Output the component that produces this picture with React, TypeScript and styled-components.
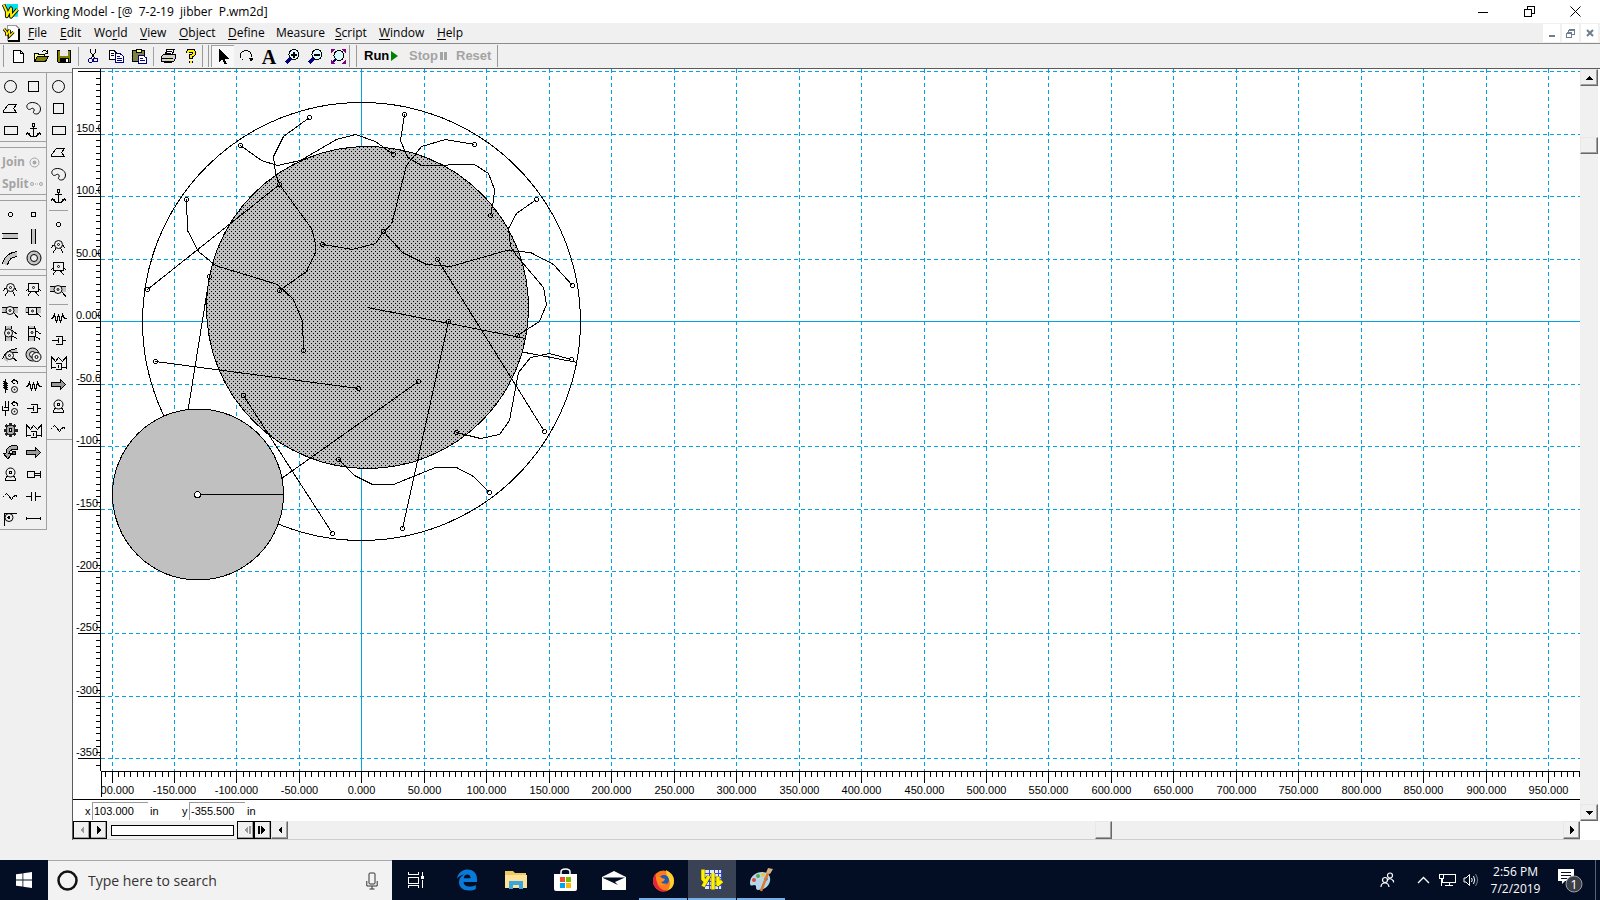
import React from "react";
import styled, { createGlobalStyle } from "styled-components";

const FACE = "#f0f0f0";
const UI = '"Open Sans", "Noto Sans", sans-serif';
const READOUT = '"Liberation Sans", Arial, sans-serif';

const GlobalStyle = createGlobalStyle`
  *, *::before, *::after { box-sizing: border-box; }
  body { margin: 0; background: ${FACE}; color: #000; font-family: ${UI}; font-size: 12px; overflow: hidden; }
  button, input { font: inherit; color: inherit; margin: 0; padding: 0; border: 0; background: none; border-radius: 0; }
  svg { display: block; flex: none; }
`;

/* ---------- frame ---------- */

const Desktop = styled.div`
  display: flex;
  flex-direction: column;
  height: 100vh;
`;

const TitleBar = styled.header`
  display: flex;
  align-items: center;
  height: 23px;
  padding: 0 2px;
  gap: 4px;
  background: #fff;
`;

const Title = styled.h1`
  flex: 1;
  margin: 0;
  font-size: 12px;
  font-weight: 400;
  line-height: 20px;
  white-space: pre;
`;

const CaptionButtons = styled.div`
  display: flex;
`;

const CaptionButton = styled.button`
  display: grid;
  place-items: center;
  width: 46px;
  height: 22px;
`;

const MenuBar = styled.nav`
  display: flex;
  align-items: center;
  height: 21px;
  padding: 0 2px 0 3px;
  background: ${FACE};
  border-bottom: 1px solid #8c8c8c;
`;

const MenuItem = styled.button<{ $w: number }>`
  width: ${(p) => p.$w}px;
  height: 20px;
  padding-left: 7px;
  line-height: 18px;
  text-align: left;
  white-space: nowrap;
  u { text-underline-offset: 2px; }
`;

const MdiButtons = styled.div`
  display: flex;
  gap: 2px;
  margin-left: auto;
`;

const MdiButton = styled.button`
  display: grid;
  place-items: center;
  width: 17px;
  height: 18px;
  background: #fff;
`;

/* ---------- toolbar ---------- */

const ToolBar = styled.div`
  display: flex;
  align-items: center;
  height: 24px;
  background: ${FACE};
`;

const ToolGroup = styled.div<{ $lead: number; $pad?: number }>`
  display: flex;
  align-items: center;
  height: 22px;
  margin-left: ${(p) => p.$lead}px;
  padding-left: ${(p) => p.$pad ?? 2}px;
  border-left: 1px solid #9a9a9a;
  border-right: 1px solid #9a9a9a;
`;

const ToolButton = styled.button<{ $pressed?: boolean }>`
  display: grid;
  place-items: center;
  width: 23px;
  height: 22px;
  background: ${(p) => (p.$pressed ? "#f8f8f8" : "transparent")};
  border-style: solid;
  border-width: 1px 0 0 1px;
  border-color: ${(p) => (p.$pressed ? "#a0a0a0" : "transparent")};
`;

const ToolDivider = styled.span`
  width: 1px;
  height: 19px;
  margin: 0 2px 0 3px;
  background: #a0a0a0;
`;

const RunButton = styled.button<{ $w: number }>`
  display: flex;
  align-items: center;
  gap: 2px;
  width: ${(p) => p.$w}px;
  height: 22px;
  font: bold 13px/22px "Liberation Sans", sans-serif;
  &:disabled { color: #a4a4a4; }
`;

/* ---------- palettes ---------- */

const Workspace = styled.main`
  display: flex;
  flex: 1;
  min-height: 0;
`;

const PaletteWide = styled.aside`
  width: 47px;
  padding-top: 4px;
`;

const PaletteSlim = styled.aside`
  width: 25px;
  padding-top: 4px;
`;

const PaletteBlock = styled.div`
  display: grid;
  grid-template-columns: 22px 23px;
  grid-auto-rows: 22px;
  margin-bottom: 5px;
  padding-top: 2px;
  border: 1px solid #a0a0a0;
  border-left-width: 0;
`;

const PaletteButton = styled.button`
  display: grid;
  place-items: center;
  width: 100%;
  max-width: 23px;
  height: 22px;
`;

const PaletteText = styled.button`
  grid-column: 1 / -1;
  display: flex;
  align-items: center;
  gap: 1px;
  padding: 2px 0 0 2px;
  font: bold 12px/20px ${UI};
  &:disabled { color: #a4a4a4; }
`;

const PaletteRule = styled.hr`
  width: 19px;
  height: 6px;
  margin: 0 2px;
  border: 0;
  background: linear-gradient(#a0a0a0, #a0a0a0) 0 3px / 100% 1px no-repeat;
`;

const SlimFrame = styled.div`
  padding-top: 2px;
  border: 1px solid #a0a0a0;
  border-right: 0;
  border-left-width: 0;
  box-shadow: -1px 0 0 #a0a0a0;
`;

/* ---------- document ---------- */

const DocumentPane = styled.section`
  display: flex;
  flex-direction: column;
  flex: 1;
  min-width: 0;
  border: solid #605860;
  border-width: 1px 0 0 1px;
  background: #fff;
`;

const DocumentBody = styled.div`
  display: flex;
  flex: 1;
  min-height: 0;
`;

const Sheet = styled.div`
  display: grid;
  grid-template-columns: 28px minmax(0, 1fr);
  grid-template-rows: minmax(0, 1fr) 29px 21px;
  flex: 1;
  min-width: 0;
`;

const Drawing = styled.svg`
  width: 100%;
  height: 100%;
  overflow: hidden;
  shape-rendering: crispEdges;
  text {
    font-family: ${READOUT};
    font-size: 11px;
  }
`;

const RulerCorner = styled.div`
  border: solid #000;
  border-width: 0 0 1px;
`;

const CoordBar = styled.form`
  grid-column: 1 / -1;
  display: flex;
  align-items: center;
  padding-left: 12px;
  font: 11px/18px ${READOUT};
`;

const CoordLabel = styled.label`
  width: 7px;
`;

const CoordInput = styled.input`
  width: 56px;
  height: 18px;
  padding-left: 1px;
  border: solid #9a9a9a;
  border-width: 1px 0 0 1px;
`;

const CoordUnit = styled.span`
  width: 34px;
  padding-left: 2px;
`;

const VScroll = styled.div`
  display: flex;
  flex-direction: column;
  width: 18px;
  margin-right: 2px;
  background: ${FACE};
`;

const HScrollRow = styled.div`
  display: flex;
  height: 19px;
  margin-right: 20px;
  background: ${FACE};
  border-bottom: 1px solid #c8d0c8;
`;

const Spacer = styled.span<{ $grow: number }>`
  flex: ${(p) => p.$grow} 1 0;
`;

const Bevel = styled.button<{ $outlined?: boolean; $vertical?: boolean }>`
  display: grid;
  place-items: center;
  flex: none;
  width: ${(p) => (p.$vertical ? 18 : 17)}px;
  height: ${(p) => (p.$vertical ? 17 : 18)}px;
  background: ${FACE};
  border: 1px solid;
  border-color: ${(p) => (p.$outlined ? "#000" : "#e8e8e8 #696969 #696969 #e8e8e8")};
  box-shadow: inset -1px -1px 0 #a0a0a0;
`;

const TapeTrack = styled.div`
  display: flex;
  align-items: center;
  width: 130px;
  padding: 0 3px 0 4px;
  background: ${FACE};
`;

const Tape = styled.div`
  flex: 1;
  height: 11px;
  background: #fff;
  border: 1px solid #000;
`;

const StatusBar = styled.footer`
  height: 20px;
  background: ${FACE};
`;

/* ---------- taskbar ---------- */

const TaskBar = styled.footer`
  display: flex;
  align-items: stretch;
  height: 40px;
  background: #030d24;
  color: #fff;
`;

const StartButton = styled.button`
  display: grid;
  place-items: center;
  width: 48px;
`;

const SearchBox = styled.label`
  display: flex;
  align-items: center;
  gap: 10px;
  width: 344px;
  padding: 0 14px 0 9px;
  background: #f2f2f2;
  border-top: 1px solid #a8a8b0;
  color: #333;
`;

const SearchInput = styled.input`
  flex: 1;
  min-width: 0;
  font-size: 14px;
  &::placeholder { color: #333; opacity: 1; }
`;

const TaskList = styled.div`
  display: flex;
  gap: 1px;
  margin-left: 3px;
`;

const TaskButton = styled.button<{ $state?: "open" | "active" }>`
  display: grid;
  place-items: center;
  width: 48px;
  background: ${(p) => (p.$state === "active" ? "#3a4256" : "transparent")};
  box-shadow: ${(p) => (p.$state ? "inset 0 -2px 0 #76b0e6" : "none")};
`;

const Tray = styled.div`
  display: flex;
  align-items: center;
  margin-left: auto;
`;

const TrayButton = styled.button<{ $w: number }>`
  display: grid;
  place-items: center;
  width: ${(p) => p.$w}px;
  height: 40px;
`;

const Clock = styled.time`
  width: 65px;
  font-size: 12px;
  line-height: 17px;
  text-align: center;
`;

const PeekEdge = styled.button`
  width: 5px;
  height: 40px;
  margin-left: 3px;
  border-left: 1px solid #5a6274;
`;

/* ---------- palette glyphs, drawn on a 22px grid ---------- */

const GREY = "#a8a8a8";

/* one-pixel ring, five pixels across */
const RING = "M-1.500-2.500h3v1h-3zM-1.500 1.500h3v1h-3zM-2.500-1.500h1v3h-1zM1.500-1.500h1v3h-1z";

const glyphs: Record<string, React.ReactNode> = {
  circle: <circle cx="11.500" cy="11.500" r="6" shapeRendering="auto" />,
  square: <rect x="6.500" y="6.500" width="10" height="10" />,
  polygon: <path d="M4.500 15.500V13.500L9.500 7.500H17.500L14.500 11.500L17.500 15.500Z" />,
  blob: <path d="M5.500 11.500C3.500 8.500 6 5.500 10.500 5.500C15 5.500 18.500 8.500 18.500 12C18.500 15 16.500 17 14.500 17C12 17 10.500 15.500 12 14C13 12.500 11 10.500 9.500 11.500C8.500 12.500 6.500 13 5.500 11.500Z" shapeRendering="auto" />,
  rect: <rect x="5.500" y="7.500" width="13" height="8" />,
  anchor: (
    <>
      <circle cx="11.500" cy="6" r="1.500" />
      <path d="M11.500 8V17.500M8 9.500H15M5.500 13.500Q6 17.500 11.500 17.500Q17 17.500 17.500 13.500M4 15.500L5.500 13.500L8 15.500M15 15.500L17.500 13.500L19 15.500" />
    </>
  ),
  point: <path d={RING} transform="translate(11.500 11.500)" fill="#000" stroke="none" />,
  squarePoint: <rect x="9.500" y="9.500" width="4" height="4" />,
  hSlot: (
    <>
      <rect x="4" y="9" width="15" height="4" fill="#c4c4c4" stroke="none" />
      <path d="M3 8.500H19M3 13.500H19" />
    </>
  ),
  vSlot: (
    <>
      <rect x="9" y="4" width="4" height="15" fill="#c4c4c4" stroke="none" />
      <path d="M9.500 4V19M13.500 4V19" />
    </>
  ),
  curvedSlot: (
    <>
      <path d="M3.500 17Q6 6 18 4.500V9.500Q10 10 8.500 18Z" fill="#c4c4c4" stroke="none" />
      <path d="M3.500 17Q6 6 18.500 4.500M8.500 18Q10 10 18.500 9.500" />
    </>
  ),
  ring: (
    <g shapeRendering="auto">
      <circle cx="12" cy="11" r="7" fill="#c4c4c4" />
      <circle cx="12" cy="11" r="3.500" fill={FACE} />
    </g>
  ),
  pin: (
    <>
      <path d="M8 10.500H6L3.500 13.500M14 10.500H16L18.500 13.500M9 13.500L5.500 18.500M13.500 13.500L16.500 18.500" />
      <g shapeRendering="auto">
        <circle cx="11.500" cy="9.500" r="4" fill={FACE} />
        <circle cx="11.500" cy="9.500" r="1" />
      </g>
    </>
  ),
  rigid: (
    <>
      <path d="M6.500 10.500L3.500 13.500M16.500 10.500L19.500 13.500M8.500 14L5.500 18.500M13.500 14L17.500 18.500" />
      <rect x="6.500" y="5.500" width="10" height="8" fill={FACE} />
      <circle cx="11.500" cy="9.500" r="1" shapeRendering="auto" />
    </>
  ),
  hSlotPin: (
    <>
      <path d="M3 8H7V12.500H3ZM15 8H19V12.500H15Z" fill="#c4c4c4" stroke="none" />
      <path d="M3 7.500H19M3 12.500H8M14 11.500L19.500 18.500" />
      <g shapeRendering="auto">
        <circle cx="11" cy="10.500" r="4" fill={FACE} />
        <circle cx="11" cy="10.500" r="1" />
      </g>
    </>
  ),
  hSlotSquare: (
    <>
      <path d="M3 8H7V12.500H3ZM15 8H19V12.500H15Z" fill="#c4c4c4" stroke="none" />
      <path d="M4 7.500H19M4 12.500H8M14 12.500L19.500 17.500" />
      <rect x="6.500" y="7.500" width="8" height="7" fill={FACE} />
      <circle cx="10.500" cy="11" r="1" shapeRendering="auto" />
    </>
  ),
  vSlotPin: (
    <>
      <path d="M7 4H12.500V7H7ZM7 15H12.500V19H7Z" fill="#c4c4c4" stroke="none" />
      <path d="M6.500 4V19M12.500 4V7M12.500 15V19M13 8.500L18.500 12.500M12 14L18.500 16.500" />
      <g shapeRendering="auto">
        <circle cx="9.500" cy="11" r="4" fill={FACE} />
        <circle cx="9.500" cy="11" r="1" />
      </g>
    </>
  ),
  vSlotSquare: (
    <>
      <path d="M7 4H12.500V7H7ZM7 15H12.500V19H7Z" fill="#c4c4c4" stroke="none" />
      <path d="M6.500 4V19M12.500 4V7M12.500 15V19M13.500 8.500L19.500 12.500M13 14.500L18.500 17.500" />
      <rect x="6.500" y="6.500" width="7" height="8" fill={FACE} />
      <circle cx="10" cy="10.500" r="1" shapeRendering="auto" />
    </>
  ),
  curvedPin: (
    <>
      <path d="M4.500 16Q6 6 18 4.500V8Q10 10 8.500 18Z" fill="#c4c4c4" stroke="none" />
      <path d="M3.500 15Q6 6 18.500 4.500M13 8.500H18.500M13 13L18.500 17.500" />
      <g shapeRendering="auto">
        <circle cx="10.500" cy="11.500" r="4" fill={FACE} />
        <circle cx="10.500" cy="11.500" r="1" />
      </g>
    </>
  ),
  ringPin: (
    <g shapeRendering="auto">
      <circle cx="10.500" cy="10.500" r="6.500" fill="#c4c4c4" />
      <circle cx="10.500" cy="10.500" r="3" fill={FACE} />
      <circle cx="14.500" cy="13" r="4.500" fill={FACE} />
      <circle cx="14.500" cy="13" r="1.500" />
    </g>
  ),
  rotSpring: (
    <>
      <path d="M6.500 4V6.500H4L9 8.500H4L9 10.500H4L9 12.500H4L9 14.500H6.500V18M13 6.500Q18.500 3 18.500 9M15.500 4L12.500 6.500L15.500 9" />
      <g shapeRendering="auto">
        <circle cx="15.500" cy="14.500" r="3" />
        <circle cx="15.500" cy="14.500" r="0.500" />
      </g>
    </>
  ),
  rotDamper: (
    <>
      <path d="M6.500 4V10.500M5 10.500H9M3.500 9V13.500H9.500V4M6.500 13.500V18.500M13 6.500Q18.500 3 18.500 9M15.500 4L12.500 6.500L15.500 9" />
      <g shapeRendering="auto">
        <circle cx="15.500" cy="14.500" r="3" />
        <circle cx="15.500" cy="14.500" r="0.500" />
      </g>
    </>
  ),
  spring: <path d="M4 11.500H5.500L7.500 7.500L9.500 15.500L11.500 7.500L13.500 15.500L15.500 7.500L17.500 11.500H20" />,
  damper: <path d="M5 11.500H11.500M11.500 9V14M9 7.500H15.500M9 15.500H15.500M15.500 7.500V15.500M15.500 11.500H19" />,
  gear: (
    <>
      <path d="M11.500 4V18M4.500 11H18.500M6.500 6L16.500 16M16.500 6L6.500 16" strokeWidth="3" stroke="#222" />
      <circle cx="11.500" cy="11" r="4.500" fill={GREY} stroke="#222" />
      <circle cx="11.500" cy="11" r="1.500" fill={FACE} />
    </>
  ),
  springDamper: <path d="M4.500 17.500V5.500L8.500 10.500L11.500 6.500L15.500 10.500L19.500 5.500V17.500M4.500 16.500H9M9 12.500H14.500V18.500H9M11.500 14V17M14.500 16.500H19.500" />,
  torque: (
    <>
      <path d="M18 5Q8 3 7 12H4L9 18L13 12H10Q11 8 18 8Z" fill={GREY} />
      <circle cx="15" cy="12" r="2" fill="#666" />
    </>
  ),
  force: <path d="M4.500 9.500H13.500V6.500L18.500 11.500L13.500 16.500V13.500H4.500Z" fill="#999" />,
  motor: (
    <>
      <circle cx="11.500" cy="9.500" r="4.500" shapeRendering="auto" />
      <circle cx="11.500" cy="9.500" r="1" />
      <path d="M8.500 13L6.500 15.500V17.500H16.500V15.500L14.500 13" />
    </>
  ),
  actuator: (
    <>
      <rect x="5.500" y="8.500" width="7" height="6" />
      <rect x="12.500" y="10.500" width="6" height="2" />
      <path d="M18.500 8V15" />
    </>
  ),
  wave: <path d="M4 11.500L5.500 10.500L7.500 8.500L9.500 10.500L12.500 14.500L14.500 11.500L16.500 10.500L18.500 11.500" />,
  separator: <path d="M4 11.500H9.500M9.500 7V16M13.500 7V16M13.500 11.500H19" />,
  pulley: (
    <>
      <path d="M5.500 18.500V6.500H18" />
      <circle cx="10" cy="10.500" r="4" shapeRendering="auto" />
      <circle cx="10" cy="10.500" r="1" />
    </>
  ),
  rod: <path d="M5 11.500H18M4.500 10V13M18.500 10V13" />,
};

function Glyph({ name }: { name: string }) {
  return (
    <svg width="22" height="22" viewBox="1 0 22 22" fill="none" stroke="#000" shapeRendering="crispEdges" aria-hidden>
      {glyphs[name]}
    </svg>
  );
}

const Tools = ({ names }: { names: string[] }) => (
  <>
    {names.map((n) => (
      <PaletteButton key={n} type="button" aria-label={n}>
        <Glyph name={n} />
      </PaletteButton>
    ))}
  </>
);

const Arrow = ({ dir, color = "#000", bar }: { dir: "l" | "r" | "u" | "d"; color?: string; bar?: boolean }) => {
  const d = { l: "M7 1V9L3 5Z", r: "M3 1V9L7 5Z", u: "M1 7H9L5 3Z", d: "M1 3H9L5 7Z" }[dir];
  return (
    <svg width="12" height="10" viewBox="-1 0 12 10" fill={color} shapeRendering="crispEdges" aria-hidden>
      <path d={d} />
      {bar && <path d={dir === "l" ? "M8 1h2v8h-2z" : "M0 1h2v8h-2z"} />}
    </svg>
  );
};

/* ---------- world geometry ---------- */

const STEP_X = 62.46;
const STEP_Y = 62.44;
const ORIGIN_X = 260.88;
const ORIGIN_Y = 252.7;
const gx = (k: number) => Math.floor(ORIGIN_X + k * STEP_X) + 0.5;
const gy = (k: number) => Math.floor(ORIGIN_Y - k * STEP_Y) + 0.5;
const range = (a: number, b: number) => Array.from({ length: b - a + 1 }, (_, i) => a + i);
const COLS = range(-4, 40);
const ROWS = range(-16, 4);
const COL_LABELS = range(-4, 19);
const ROW_LABELS = range(-7, 3);

const wires = [
  "309,117 283,136 273,156 275,173 279,184 311,228 315,243 315,252 306,271 279,290",
  "240,145 261,160 277,165 300,160 336,139 355,134 375,141 393,154",
  "186,199 187,230 198,251 215,265 277,284 293,299 302,321 303,350",
  "147,289 279,184",
  "322,244 352,249 375,243 383,231 391,224 406,165 421,146 445,139 474,144",
  "404,114 400,140 407,157 421,165 474,164 488,173 494,189 493,200 490,215",
  "383,231 402,252 426,264 450,266 506,250 530,252 553,264 572,285",
  "536,199 516,213 508,228 510,246 516,255 543,287 546,304 539,321 517,335",
  "437,259 544,431",
  "448,321 402,528",
  "155,361 358,388",
  "243,395 332,533",
  "338,459 354,475 372,484 393,484 435,467 456,467 473,476 489,492",
  "571,359 549,353 530,357 518,372 509,420 499,434 480,438 456,432",
  "209,276 180,457",
  "418,381 240,507",
  "367,307 525,338",
];

const joints = [
  [309, 117], [279, 184], [279, 290], [240, 145], [393, 154], [186, 199], [303, 350], [147, 289], [322, 244],
  [383, 231], [474, 144], [404, 114], [490, 215], [572, 285], [536, 199], [517, 335], [437, 259], [544, 431],
  [448, 321], [402, 528], [155, 361], [358, 388], [243, 395], [332, 533], [338, 459], [489, 492], [571, 359],
  [456, 432], [209, 276], [418, 381],
];

function World() {
  return (
    <Drawing role="img" aria-label="Simulation world">
      <defs>
        <pattern id="stipple" width="4" height="4" patternUnits="userSpaceOnUse" patternTransform="translate(0.500 0.500)">
          <rect width="4" height="4" fill="#c0c0c0" />
          <path d="M0 0h1v1h-1zM2 2h1v1h-1z" fill="#000" />
        </pattern>
      </defs>
      <g stroke="#00a2e8" strokeDasharray="4 3">
        {COLS.filter((k) => k !== 0).map((k) => (
          <line key={k} x1={gx(k)} x2={gx(k)} y1="0" y2="100%" />
        ))}
        {ROWS.filter((k) => k !== 0).map((k) => (
          <line key={k} x1="0" x2="100%" y1={gy(k)} y2={gy(k)} />
        ))}
      </g>
      <g stroke="#00a2e8">
        <line x1={gx(0)} x2={gx(0)} y1="0" y2="100%" />
        <line x1="0" x2="100%" y1={gy(0)} y2={gy(0)} />
      </g>
      <g transform="translate(-100.500 -68.500)" fill="none" stroke="#000">
        <circle cx="361" cy="321" r="219" fill="none" />
        <path d="M361 321L577 362" />
        <circle cx="367" cy="307" r="161" fill="url(#stipple)" />
        {wires.map((w) => (
          <polyline key={w} points={w} />
        ))}
        <g fill="#000" stroke="none">
          {joints.map(([x, y]) => (
            <path key={`${x}-${y}`} d={RING} transform={`translate(${x} ${y})`} />
          ))}
        </g>
        <circle cx="197.500" cy="494" r="85.500" fill="#c0c0c0" />
        <path d="M197 494H283" />
        <circle cx="197" cy="494" r="3" fill="#fff" />
      </g>
    </Drawing>
  );
}

function VerticalRuler() {
  return (
    <Drawing aria-label="Vertical ruler">
      <g stroke="#000">
        {range(-160, 40).map((k) => (
          <line key={k} x1="23" x2="28" y1={gy(k / 10)} y2={gy(k / 10)} />
        ))}
        {ROWS.map((k) => (
          <line key={k} x1="5" x2="28" y1={gy(k)} y2={gy(k)} />
        ))}
        <line x1="27.500" x2="27.500" y1="0" y2="100%" />
      </g>
      <svg width="27" height="100%">
        {ROW_LABELS.map((k) => (
          <text key={k} x="3" y={gy(k) - 3}>
            {(k * 50).toFixed(3)}
          </text>
        ))}
      </svg>
    </Drawing>
  );
}

function HorizontalRuler() {
  return (
    <Drawing aria-label="Horizontal ruler">
      <g stroke="#000">
        <line x1="0" x2="100%" y1="0.500" y2="0.500" />
        <line x1="0" x2="100%" y1="28.500" y2="28.500" />
        <line x1="0.500" x2="0.500" y1="0" y2="26" />
        {range(-41, 400).map((k) => (
          <line key={k} x1={gx(k / 10)} x2={gx(k / 10)} y1="0" y2="6" />
        ))}
        {COLS.map((k) => (
          <line key={k} x1={gx(k)} x2={gx(k)} y1="0" y2="12" />
        ))}
      </g>
      {COL_LABELS.map((k) => (
        <text key={k} x={gx(k)} y="23" textAnchor="middle">
          {(k * 50).toFixed(3)}
        </text>
      ))}
    </Drawing>
  );
}

/* ---------- application icons ---------- */

const MARK = "M1.500 1.500L4.500 8V12.500L8.500 5V13L14.500 6";

const ModelMark = () => (
  <svg width="17" height="17" viewBox="0 0 16 16" fill="none" strokeLinejoin="round" aria-hidden>
    <path d="M4 1H15V13H6Z" fill="#00e0ee" />
    <path d={MARK} stroke="#000" strokeWidth="3.500" />
    <path d={MARK} stroke="#ffee00" strokeWidth="1.800" />
  </svg>
);

const DocMark = () => (
  <svg width="18" height="17" viewBox="0 0 18 17" aria-hidden>
    <path d="M4.500 .5H13L16.500 4V15.500H4.500Z" fill="#fff" stroke="#999" shapeRendering="crispEdges" />
    <path d="M16 4V16H5" fill="none" stroke="#000" strokeWidth="2" shapeRendering="crispEdges" />
    <path d="M1 4L3.500 7V10.500L6.500 5V11L10.500 7" fill="none" stroke="#000" strokeWidth="3" />
    <path d="M1 4L3.500 7V10.500L6.500 5V11L10.500 7" fill="none" stroke="#ffee00" strokeWidth="1.300" />
  </svg>
);

const toolArt: Record<string, React.ReactNode> = {
  New: <path d="M3.500 2.500H10.500L13.500 5.500V14.500H3.500ZM10.500 2.500V5.500H13.500" fill="#fff" stroke="#000" />,
  Open: (
    <>
      <path d="M1.500 13.500V5.500H5L6 6.500H11.500V9" fill="#ffff80" stroke="#000" />
      <path d="M1.500 13.500L4.500 8.500H15.500L12.500 13.500Z" fill="#808000" stroke="#000" />
      <path d="M9 4Q11 1 14 4M14.500 2V5H12" fill="none" stroke="#000" />
    </>
  ),
  Save: (
    <>
      <path d="M1.500 2.500H14.500V14.500H2.500L1.500 13.500Z" fill="#808000" stroke="#000" />
      <path d="M4 2H12V8H4Z" fill="#e8e8e8" />
      <path d="M4 10H13V15H4Z" fill="#000" />
      <path d="M10 11H12V14H10Z" fill="#fff" />
    </>
  ),
  Cut: (
    <>
      <path d="M5.500 1V4L9.500 10M10.500 1V4L6.500 10" fill="none" stroke="#000" />
      <circle cx="5.500" cy="12.500" r="2" fill="none" stroke="#000080" />
      <circle cx="10.500" cy="12" r="2" fill="none" stroke="#000080" />
    </>
  ),
  Copy: (
    <>
      <path d="M1.500 2.500H6L8.500 5V11.500H1.500Z" fill="#fff" stroke="#000" />
      <path d="M3 5.500H6M3 7.500H6" stroke="#000" />
      <path d="M7.500 5.500H12L15.500 8.500V14.500H7.500Z" fill="#fff" stroke="#000080" />
      <path d="M9 8.500H12M9 10.500H14M9 12.500H14" stroke="#000080" />
    </>
  ),
  Paste: (
    <>
      <rect x="1.500" y="2.500" width="12" height="11" rx="1" fill="#808040" stroke="#000" />
      <path d="M5 1.500H10V4.500H5Z" fill="#ffff80" stroke="#000" />
      <path d="M7.500 7.500H12L15.500 10V15.500H7.500Z" fill="#fff" stroke="#000080" />
      <path d="M9 10.500H12M9 12.500H14" stroke="#000080" />
    </>
  ),
  Print: (
    <>
      <path d="M5 7.500L7 1.500H14L12 7.500" fill="#fff" stroke="#000" />
      <path d="M7 3.500H12M6 5.500H11" stroke="#000" />
      <path d="M1.500 8.500L3.500 6.500H15.500V10.500L13.500 13.500H1.500Z" fill="#d0d0d0" stroke="#000" />
      <path d="M2 10.500H13M4 14.500H12" stroke="#000" />
      <path d="M8 11H11V12H8Z" fill="#ffee00" />
    </>
  ),
  Help: (
    <>
      <path d="M5 5Q5 2.500 8 2.500Q11 2.500 11 5Q11 7 8 8V10.500M8 12.500V15" fill="none" stroke="#000" strokeWidth="4" />
      <path d="M5 5Q5 2.500 8 2.500Q11 2.500 11 5Q11 7 8 8V10M8 13V14.500" fill="none" stroke="#ffee00" strokeWidth="2" />
    </>
  ),
  Pointer: <path d="M4 1V14L7 11L9.500 16H12L9.500 10.500H13.500Z" fill="#000" />,
  Rotate: (
    <>
      <path d="M3 10Q1 3 8 2.500Q14 3 13.500 9" fill="none" stroke="#000" />
      <path d="M10 9.500H16L13 13.500Z" fill="#000" />
      <path d="M4 11L8 13.500" stroke="#000" strokeDasharray="1 2" />
    </>
  ),
  "Zoom in": (
    <>
      <path d="M2 15L6.500 10.500" stroke="#000080" strokeWidth="3" />
      <circle cx="10" cy="6.500" r="5" fill="#d8fbff" stroke="#000" />
      <path d="M7 6.500H13M10 3.500V9.500" stroke="#000" strokeWidth="2" />
    </>
  ),
  "Zoom out": (
    <>
      <path d="M2 15L6.500 10.500" stroke="#000080" strokeWidth="3" />
      <circle cx="10" cy="6.500" r="5" fill="#d8fbff" stroke="#000" />
      <path d="M7 6.500H13" stroke="#000" strokeWidth="2" />
    </>
  ),
  "Zoom to extent": (
    <>
      <path d="M1 1H5L1 5ZM11 1H16V5ZM1 11V16H5ZM16 11V16H11Z" fill="#800080" />
      <path d="M3 14L6 11" stroke="#000080" strokeWidth="2" />
      <circle cx="9" cy="7.500" r="5" fill="#d8fbff" stroke="#000" />
    </>
  ),
};

const Tool = ({ name, pressed }: { name: string; pressed?: boolean }) => (
  <ToolButton type="button" aria-label={name} $pressed={pressed}>
    <svg width="17" height="17" viewBox="0 0 17 17" shapeRendering="crispEdges" aria-hidden>
      {toolArt[name]}
    </svg>
  </ToolButton>
);

const LetterTool = styled(ToolButton)`
  font: bold 20px/20px "Liberation Serif", serif;
`;

const menus: [string, string, string, number][] = [
  ["", "F", "ile", 32],
  ["", "E", "dit", 34],
  ["Wo", "r", "ld", 46],
  ["", "V", "iew", 39],
  ["", "O", "bject", 49],
  ["", "D", "efine", 48],
  ["Measure", "", "", 59],
  ["", "S", "cript", 44],
  ["", "W", "indow", 58],
  ["", "H", "elp", 40],
];

const RestoreArt = ({ color }: { color: string }) => (
  <svg width="11" height="11" viewBox="0 0 11 11" fill="none" stroke={color} shapeRendering="crispEdges" aria-hidden>
    <path d="M.5 3.500H7.500V10.500H.5ZM3.500 3V.5H10.500V7.500H8" />
  </svg>
);

export default function App() {
  return (
    <Desktop>
      <GlobalStyle />
      <TitleBar>
        <ModelMark />
        <Title>{"Working Model - [@  7-2-19  jibber  P.wm2d]"}</Title>
        <CaptionButtons>
          <CaptionButton type="button" aria-label="Minimize">
            <svg width="10" height="10" stroke="#000" shapeRendering="crispEdges"><path d="M0 5.500H10" /></svg>
          </CaptionButton>
          <CaptionButton type="button" aria-label="Restore">
            <RestoreArt color="#000" />
          </CaptionButton>
          <CaptionButton type="button" aria-label="Close">
            <svg width="11" height="11" stroke="#000"><path d="M.5 .5L10.500 10.500M10.500 .5L.5 10.500" /></svg>
          </CaptionButton>
        </CaptionButtons>
      </TitleBar>

      <MenuBar>
        <DocMark />
        {menus.map(([a, u, b, w]) => (
          <MenuItem key={a + u + b} type="button" $w={w}>
            {a}
            {u && <u>{u}</u>}
            {b}
          </MenuItem>
        ))}
        <MdiButtons>
          <MdiButton type="button" aria-label="Minimize document">
            <svg width="8" height="8" stroke="#6f7d90" strokeWidth="2"><path d="M1 7H7" /></svg>
          </MdiButton>
          <MdiButton type="button" aria-label="Restore document">
            <svg width="9" height="9" viewBox="0 0 9 9" fill="none" stroke="#6f7d90" shapeRendering="crispEdges">
              <path d="M.5 4.500H5.500V8.500H.5ZM.5 3.500H5.500M2.500 3V1.500H8.500V5.500H6M2.500 .5H8.500" />
            </svg>
          </MdiButton>
          <MdiButton type="button" aria-label="Close document">
            <svg width="8" height="8" stroke="#6f7d90" strokeWidth="2"><path d="M1 1L7 7M7 1L1 7" /></svg>
          </MdiButton>
        </MdiButtons>
      </MenuBar>

      <ToolBar>
        <ToolGroup $lead={3}>
          <Tool name="New" />
          <Tool name="Open" />
          <Tool name="Save" />
          <ToolDivider />
          <Tool name="Cut" />
          <Tool name="Copy" />
          <Tool name="Paste" />
          <ToolDivider />
          <Tool name="Print" />
          <Tool name="Help" />
        </ToolGroup>
        <ToolGroup $lead={5}>
          <Tool name="Pointer" pressed />
          <Tool name="Rotate" />
          <LetterTool type="button">A</LetterTool>
          <Tool name="Zoom in" />
          <Tool name="Zoom out" />
          <Tool name="Zoom to extent" />
        </ToolGroup>
        <ToolGroup $lead={6} $pad={7}>
          <RunButton type="button" $w={45}>
            Run
            <svg width="8" height="10"><path d="M0 0L7 5L0 10Z" fill="#008000" /></svg>
          </RunButton>
          <RunButton type="button" $w={47} disabled>
            Stop
            <svg width="8" height="9" shapeRendering="crispEdges"><path d="M0 0h3v8h-3zM4 0h3v8h-3z" fill="#a4a4a4" /></svg>
          </RunButton>
          <RunButton type="button" $w={41} disabled>Reset</RunButton>
        </ToolGroup>
      </ToolBar>

      <Workspace>
        <PaletteWide>
          <PaletteBlock>
            <Tools names={["circle", "square", "polygon", "blob", "rect", "anchor"]} />
          </PaletteBlock>
          <PaletteBlock>
            <PaletteText type="button" disabled>
              Join
              <svg width="14" height="11" fill="none" stroke="#a4a4a4">
                <circle cx="8.500" cy="5.500" r="4.500" />
                <circle cx="8.500" cy="5.500" r="1.500" fill="#a4a4a4" />
              </svg>
            </PaletteText>
            <PaletteText type="button" disabled>
              Split
              <svg width="13" height="6" fill="none" stroke="#a4a4a4">
                <circle cx="2" cy="3" r="1.500" />
                <circle cx="11" cy="3" r="1.500" />
                <path d="M5 3H8" strokeDasharray="1 1" />
              </svg>
            </PaletteText>
          </PaletteBlock>
          <PaletteBlock>
            <Tools names={["point", "squarePoint", "hSlot", "vSlot", "curvedSlot", "ring"]} />
          </PaletteBlock>
          <PaletteBlock>
            <Tools names={["pin", "rigid", "hSlotPin", "hSlotSquare", "vSlotPin", "vSlotSquare", "curvedPin", "ringPin"]} />
          </PaletteBlock>
          <PaletteBlock>
            <Tools
              names={[
                "rotSpring", "spring", "rotDamper", "damper", "gear", "springDamper", "torque", "force",
                "motor", "actuator", "wave", "separator", "pulley", "rod",
              ]}
            />
          </PaletteBlock>
        </PaletteWide>
        <PaletteSlim>
          <SlimFrame>
            <Tools names={["circle", "square", "rect", "polygon", "blob", "anchor"]} />
            <PaletteRule />
            <Tools names={["point", "pin", "rigid", "hSlotPin"]} />
            <PaletteRule />
            <Tools names={["spring", "damper", "springDamper", "force", "motor", "wave"]} />
          </SlimFrame>
        </PaletteSlim>

        <DocumentPane>
          <DocumentBody>
            <Sheet>
              <VerticalRuler />
              <World />
              <RulerCorner />
              <HorizontalRuler />
              <CoordBar>
                <CoordLabel htmlFor="coord-x">x</CoordLabel>
                <CoordInput id="coord-x" defaultValue="103.000" />
                <CoordUnit>in</CoordUnit>
                <CoordLabel htmlFor="coord-y">y</CoordLabel>
                <CoordInput id="coord-y" defaultValue="-355.500" />
                <CoordUnit>in</CoordUnit>
              </CoordBar>
            </Sheet>
            <VScroll>
              <Bevel type="button" aria-label="Scroll up" $vertical><Arrow dir="u" /></Bevel>
              <Spacer $grow={51} />
              <Bevel type="button" aria-label="Vertical scroll thumb" $vertical />
              <Spacer $grow={650} />
              <Bevel type="button" aria-label="Scroll down" $vertical><Arrow dir="d" /></Bevel>
            </VScroll>
          </DocumentBody>
          <HScrollRow>
            <Bevel type="button" aria-label="Step back" $outlined><Arrow dir="l" color="#999" /></Bevel>
            <Bevel type="button" aria-label="Play" $outlined><Arrow dir="r" /></Bevel>
            <TapeTrack><Tape /></TapeTrack>
            <Bevel type="button" aria-label="Previous frame" $outlined><Arrow dir="l" color="#999" bar /></Bevel>
            <Bevel type="button" aria-label="Next frame" $outlined><Arrow dir="r" bar /></Bevel>
            <Bevel type="button" aria-label="Scroll left"><Arrow dir="l" /></Bevel>
            <Spacer $grow={807} />
            <Bevel type="button" aria-label="Horizontal scroll thumb" />
            <Spacer $grow={451} />
            <Bevel type="button" aria-label="Scroll right"><Arrow dir="r" /></Bevel>
          </HScrollRow>
        </DocumentPane>
      </Workspace>
      <StatusBar />

      <TaskBar>
        <StartButton type="button" aria-label="Start">
          <svg width="16" height="16" fill="#fff" viewBox="0 0 16 16">
            <path d="M0 2.300L6.500 1.400V7.600H0ZM7.300 1.300L16 0V7.600H7.300ZM0 8.400H6.500V14.600L0 13.700ZM7.300 8.400H16V16L7.300 14.700Z" />
          </svg>
        </StartButton>
        <SearchBox>
          <svg width="21" height="21"><circle cx="10.500" cy="10.500" r="9" fill="none" stroke="#111" strokeWidth="2.500" /></svg>
          <SearchInput type="search" placeholder="Type here to search" />
          <svg width="12" height="18" fill="none" stroke="#333">
            <rect x="3" y="1" width="6" height="11" rx="1" />
            <path d="M.8 9V14H11.200V9M6 14V17M3.500 17H8.500" />
          </svg>
        </SearchBox>
        <TaskButton type="button" aria-label="Task view">
          <svg width="18" height="18" fill="none" stroke="#fff" shapeRendering="crispEdges">
            <path d="M1.500 1V3.500H11.500V1M1.500 6.500H11.500V12.500H1.500ZM1.500 17V14.500H11.500V17M15.500 1V5M15.500 9V17" />
            <path d="M14 5H17V8H14Z" fill="#fff" stroke="none" />
          </svg>
        </TaskButton>
        <TaskList>
          <TaskButton type="button" aria-label="Edge">
            <svg width="22" height="22" viewBox="0 0 22 22">
              <path d="M1 10C2 3 7 0.500 11.500 0.500C18 0.500 21 5 21 10V13H7.500C7.800 16 10 17.500 13.500 17.500C16 17.500 18 17 19.800 16V20C18 21 15.500 21.500 13 21.500C7 21.500 3 18 3 13C3 9.500 5 7 8.500 5.500C5 6 2.500 7.500 1 10ZM7.800 9.200H14.500C14.500 7 13.500 5.500 11.300 5.500C9.300 5.500 8 7 7.800 9.200Z" fill="#0a7ad8" fillRule="evenodd" />
            </svg>
          </TaskButton>
          <TaskButton type="button" aria-label="File Explorer">
            <svg width="22" height="20" viewBox="0 0 22 20">
              <path d="M0 1H8L10 3H21V18H0Z" fill="#f0c860" />
              <path d="M0 5H22V18H0Z" fill="#fde39a" />
              <path d="M4 19V11H18V19H14V15H8V19Z" fill="#3aa5e0" />
            </svg>
          </TaskButton>
          <TaskButton type="button" aria-label="Store">
            <svg width="23" height="24" viewBox="0 0 23 24">
              <path d="M7 7V4Q7 1 11.500 1Q16 1 16 4V7" fill="none" stroke="#fff" strokeWidth="1.500" />
              <path d="M0 6H23V21Q23 23 21 23H2Q0 23 0 21Z" fill="#fff" />
              <path d="M6 9H11V14H6Z" fill="#f25022" />
              <path d="M12 9H17V14H12Z" fill="#7fba00" />
              <path d="M6 15H11V20H6Z" fill="#00a4ef" />
              <path d="M12 15H17V20H12Z" fill="#ffb900" />
            </svg>
          </TaskButton>
          <TaskButton type="button" aria-label="Mail">
            <svg width="24" height="19" viewBox="0 0 24 19">
              <path d="M0 6L12 0L24 6V19H0Z" fill="#fff" />
              <path d="M1 6.500H23L13 11L16 14L1 7Z" fill="#030d24" />
            </svg>
          </TaskButton>
          <TaskButton type="button" aria-label="Firefox" $state="open">
            <svg width="23" height="23" viewBox="0 0 23 23">
              <circle cx="11.500" cy="12" r="10.500" fill="#ff7a1a" />
              <path d="M1 12A10.500 10.500 0 0 0 16 21.500C9 22 5 17 5 12L3 5Q1 8 1 12Z" fill="#e6253c" />
              <path d="M14 1Q22 5 22 12Q22 19 16 21Q20 14 16 9Q14 6 14 1Z" fill="#ffd02e" />
              <circle cx="12" cy="11" r="5" fill="#2358b8" />
              <path d="M4 8Q8 7 10 9L13 10Q12 13 9 13Q11 16 15 14Q12 18 8 16Q4 14 4 8Z" fill="#ff8c1a" />
            </svg>
          </TaskButton>
          <TaskButton type="button" aria-label="Working Model" $state="active">
            <svg width="24" height="24" viewBox="0 0 24 24" fill="none" strokeLinejoin="round">
              <path d="M5 2H22V21H5Z" fill="#e4e8ff" />
              <path d="M5 5.500H22M5 9.500H22M5 13.500H22M5 17.500H22M9.500 2V21M14.500 2V21M18.500 2V21M21.500 2V21" stroke="#3346d8" />
              <path d="M3 1.500V11L5 13M3 18.500L9 8M13 5V21.500M18 8.500V16.500L22 13" stroke="#4a4600" strokeWidth="4.500" />
              <path d="M3 1.500V11L5 13M3 18.500L9 8M13 5V21.500M18 8.500V16.500L22 13" stroke="#fff200" strokeWidth="3.500" />
            </svg>
          </TaskButton>
          <TaskButton type="button" aria-label="Paint" $state="open">
            <svg width="24" height="24" viewBox="0 0 24 24">
              <path d="M1 15C1 8 7 4 13 4C19 4 22 8 21 13C20 19 14 22 9 22C6 22 8 18 6 17C4 17 1 19 1 15Z" fill="#b5d7ec" />
              <circle cx="5" cy="12" r="2" fill="#e04a3a" />
              <circle cx="9" cy="8" r="2" fill="#58a83c" />
              <circle cx="14" cy="7" r="2" fill="#f3c02e" />
              <circle cx="17" cy="11" r="1.800" fill="#3c66c8" />
              <path d="M12 23L19 5" stroke="#e07a28" strokeWidth="2.500" />
              <path d="M17 5L19 0L24 1L21 6Z" fill="#d8b088" />
            </svg>
          </TaskButton>
        </TaskList>
        <Tray>
          <TrayButton type="button" aria-label="People" $w={48}>
            <svg width="15" height="16" fill="none" stroke="#fff" strokeWidth="1.200">
              <circle cx="10" cy="3.500" r="2.500" />
              <circle cx="5" cy="8" r="2.500" />
              <path d="M1 15Q1 11 5 11Q8.500 11 9 15M7.500 8Q10 5 13.500 9V10.500" />
            </svg>
          </TrayButton>
          <TrayButton type="button" aria-label="Show hidden icons" $w={24}>
            <svg width="13" height="8" fill="none" stroke="#fff" strokeWidth="1.300"><path d="M1 7L6.500 1.500L12 7" /></svg>
          </TrayButton>
          <TrayButton type="button" aria-label="Network" $w={24}>
            <svg width="17" height="14" viewBox="0 0 17 14" fill="none" stroke="#fff" shapeRendering="crispEdges">
              <path d="M3.500 1.500H16.500V9.500H3.500V5M10 10V12.500M6 12.500H14M.5 1.500H4.500V5.500H.5ZM2.500 6V12.500" />
            </svg>
          </TrayButton>
          <TrayButton type="button" aria-label="Volume" $w={24}>
            <svg width="17" height="14" viewBox="0 0 17 14" fill="none" stroke="#fff">
              <path d="M1 5H3L6.500 1.500V12.500L3 9H1ZM8.500 5Q10 7 8.500 9M10.500 3Q13 7 10.500 11" />
              <path d="M12.500 1Q16.500 7 12.500 13" stroke="#76809a" />
            </svg>
          </TrayButton>
          <Clock>2:56 PM<br />7/2/2019</Clock>
          <TrayButton type="button" aria-label="Notifications" $w={44}>
            <svg width="26" height="26" viewBox="0 0 26 26">
              <path d="M1 2H17V14H8L5 17V14H1Z" fill="#fff" />
              <path d="M4 5.500H14M4 8.500H14M4 11.500H10" stroke="#030d24" />
              <circle cx="17" cy="17" r="8" fill="#3c3f46" stroke="#9a9da4" />
              <text x="17" y="22" textAnchor="middle" fill="#fff" fontSize="13" fontFamily="Open Sans, sans-serif">1</text>
            </svg>
          </TrayButton>
          <PeekEdge type="button" aria-label="Show desktop" />
        </Tray>
      </TaskBar>
    </Desktop>
  );
}
